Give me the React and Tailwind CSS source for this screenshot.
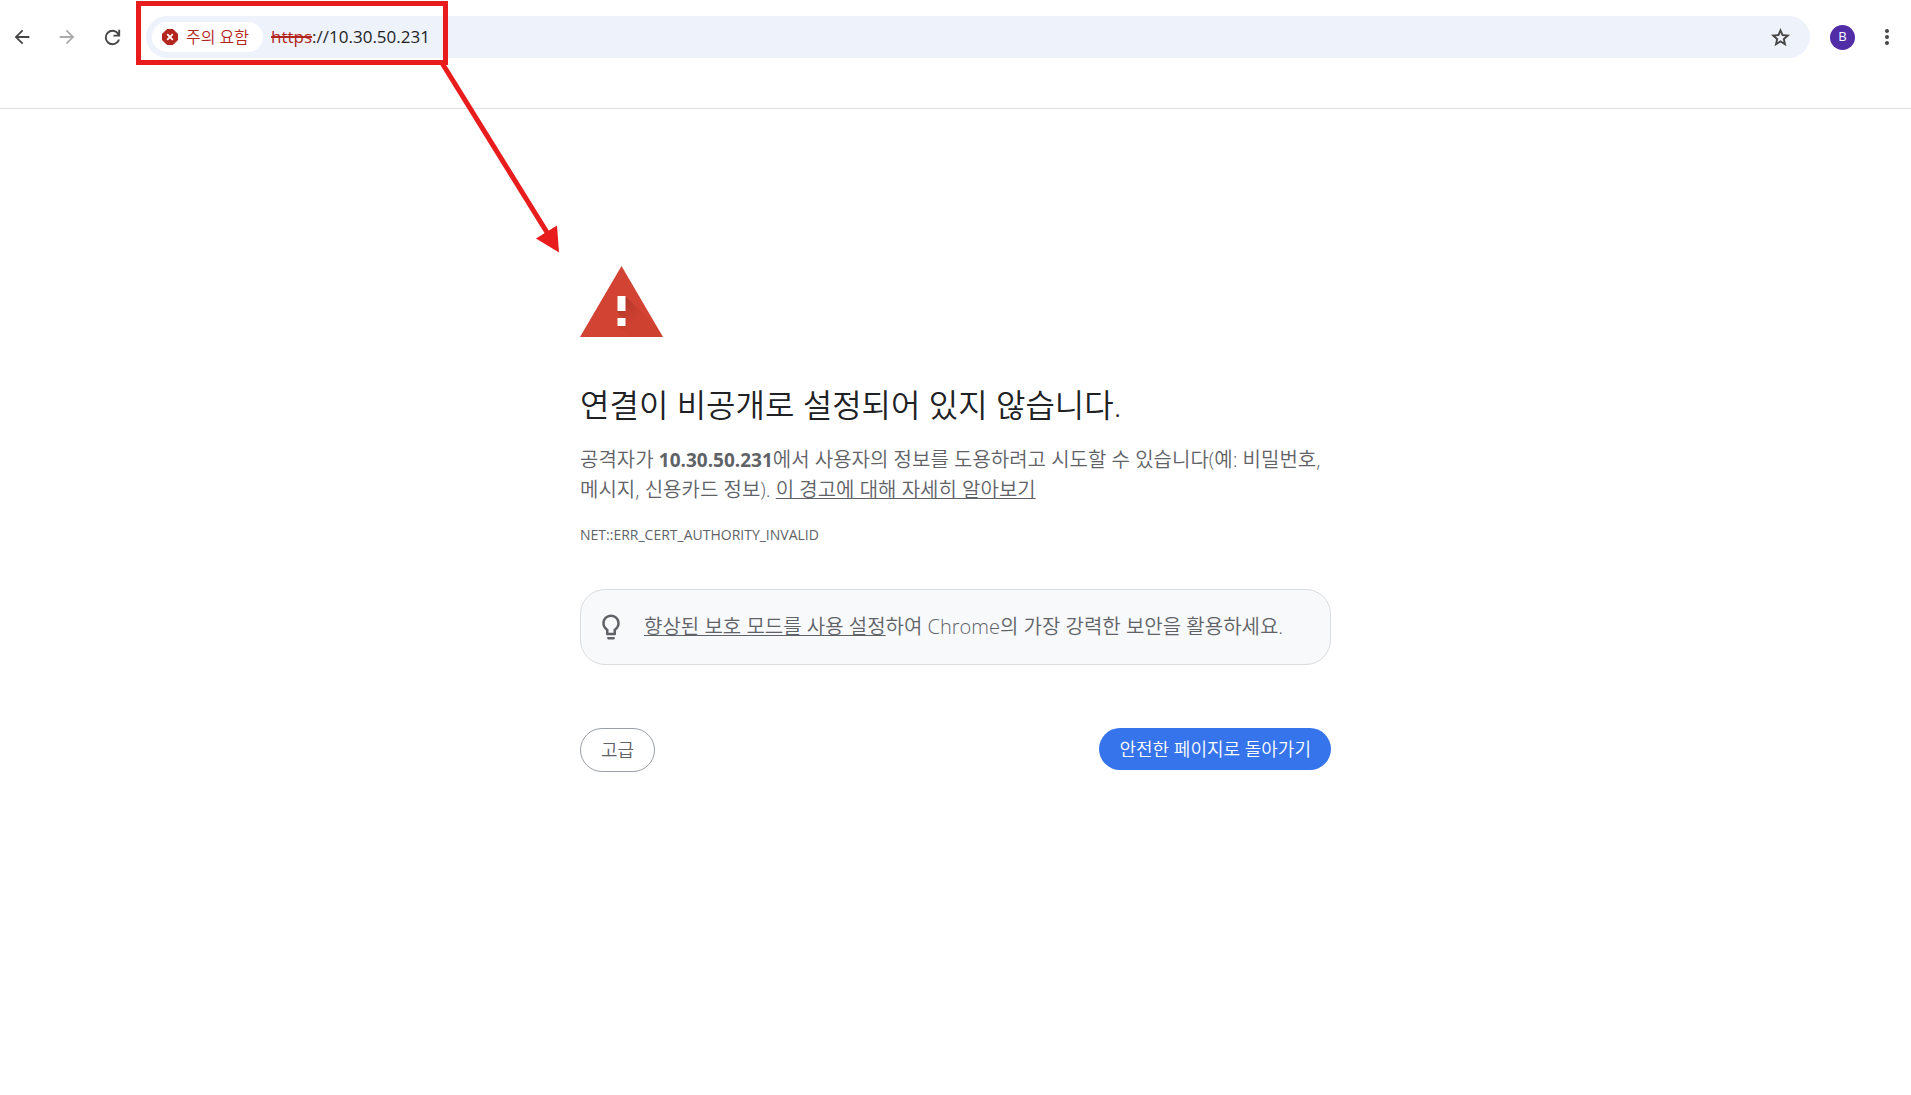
import { useState } from "react";

const FONT = "font-['Open_Sans','Noto_Sans_CJK_KR',sans-serif]";

function Icon({ size, path, className }) {
  return (
    <svg width={size} height={size} viewBox="0 0 24 24" fill="currentColor" className={className} aria-hidden="true">
      <path d={path} />
    </svg>
  );
}

const ICONS = {
  back: "M20 11H7.83l5.59-5.59L12 4l-8 8 8 8 1.41-1.41L7.83 13H20v-2z",
  forward: "M12 4l-1.41 1.41L16.17 11H4v2h12.17l-5.58 5.59L12 20l8-8z",
  reload: "M12 20q-3.35 0-5.675-2.325T4 12t2.325-5.675T12 4q1.725 0 3.3.712T18 6.75V4h2v7h-7V9h4.2q-.8-1.4-2.187-2.2T12 6Q9.5 6 7.75 7.75T6 12t1.75 4.25T12 18q1.925 0 3.475-1.1T17.65 14h2.1q-.7 2.65-2.85 4.325T12 20",
  star: "M22 9.24l-7.19-.62L12 2 9.19 8.63 2 9.24l5.46 4.73L5.82 21 12 17.27 18.18 21l-1.63-7.03L22 9.24zM12 14.9l-3.2 1.95.85-3.65-2.85-2.45 3.75-.33L12 7l1.45 3.42 3.75.33-2.85 2.45.85 3.65L12 14.9z",
  menu: "M12 8c1.1 0 2-.9 2-2s-.9-2-2-2-2 .9-2 2 .9 2 2 2zm0 2c-1.1 0-2 .9-2 2s.9 2 2 2 2-.9 2-2-.9-2-2-2zm0 6c-1.1 0-2 .9-2 2s.9 2 2 2 2-.9 2-2-.9-2-2-2z",
  bulb: "M9 20h6v1q0 1-1 1h-4q-1 0-1-1v-1zM12 2C8.14 2 5 5.14 5 9c0 2.38 1.19 4.47 3 5.74V17.5c0 .55.45 1 1 1h6c.55 0 1-.45 1-1v-2.76c1.81-1.27 3-3.36 3-5.74 0-3.86-3.14-7-7-7zm2.85 11.1l-.85.6V16.5h-4v-2.8l-.85-.6C7.8 12.16 7 10.63 7 9c0-2.76 2.24-5 5-5s5 2.24 5 5c0 1.63-.8 3.16-2.15 4.1z",
};

function NavButton({ label, path, size, disabled }) {
  return (
    <button
      type="button"
      aria-label={label}
      disabled={disabled}
      className="w-9 h-9 flex items-center justify-center rounded-full text-[#474747] disabled:text-[#ababab]"
    >
      <Icon size={size} path={path} />
    </button>
  );
}

function Toolbar() {
  return (
    <header className="h-[109px] border-b border-[#dfdfdf] pt-4 pl-1 pr-1.5">
      <div className="flex items-center h-[42px]">
        <nav className="flex gap-[9px] mr-4">
          <NavButton label="뒤로" path={ICONS.back} size={22} />
          <NavButton label="앞으로" path={ICONS.forward} size={22} disabled />
          <NavButton label="새로고침" path={ICONS.reload} size={23} />
        </nav>

        <div className="flex-1 h-full flex items-center rounded-full bg-[#edf2fb] pl-1.5 pr-[18px]">
          <button type="button" className="h-[30px] flex items-center rounded-full bg-white pl-2.5 pr-3.5 text-[16px] font-[350] text-[#b3261e]">
            <svg width="16" height="16" viewBox="0 0 16 16" className="mr-2" aria-hidden="true">
              <path d="M5 .5h6L15.5 5v6L11 15.5H5L.5 11V5z" fill="#b3261e" stroke="#b3261e" strokeLinejoin="round" />
              <path d="M5.2 5.2l5.6 5.6M10.8 5.2l-5.6 5.6" stroke="#fff" strokeWidth="1.8" />
            </svg>
            <span>주의 요함</span>
          </button>
          <p className="flex-1 ml-2 text-[17px] text-[#1f1f1f]">
            <span className="text-[#b3261e] line-through decoration-2">https</span>://10.30.50.231
          </p>
          <button type="button" aria-label="북마크" className="text-[#474747]">
            <Icon size={23} path={ICONS.star} />
          </button>
        </div>

        <button type="button" className="w-[25px] h-[25px] ml-5 mr-3.5 rounded-full bg-[#512da8] text-white text-[13px] flex items-center justify-center">
          B
        </button>
        <NavButton label="메뉴" path={ICONS.menu} size={24} />
      </div>
    </header>
  );
}

function WarningTriangle() {
  return (
    <svg width="83" height="71" viewBox="0 0 83 71" aria-hidden="true">
      <defs>
        <linearGradient id="shade" x1="37" y1="30" x2="62" y2="55" gradientUnits="userSpaceOnUse">
          <stop offset="0.2" stopColor="#a5352a" stopOpacity="0.8" />
          <stop offset="0.85" stopColor="#c53929" stopOpacity="0.3" />
        </linearGradient>
      </defs>
      <path d="M41.5 0L83 71H0z" fill="#d24333" />
      <path d="M45 30l31 30 7 11H49L37 60l8-4-8-11z" fill="url(#shade)" />
      <path d="M37.5 30h8v15h-8zM37.5 52h8v8h-8z" fill="#fff" />
    </svg>
  );
}

// red box round the address, with an arrow down to the warning
function Annotation() {
  return (
    <svg width="570" height="260" className="absolute top-0 left-0 pointer-events-none" aria-hidden="true">
      <rect x="138.5" y="3.5" width="307" height="59" fill="none" stroke="#e81c1c" strokeWidth="5" />
      <path d="M442 63L548 234" stroke="#e81c1c" strokeWidth="5" />
      <path d="M559 252.5L536 238.5L557 225.5z" fill="#e81c1c" />
    </svg>
  );
}

function App() {
  const [showDetails, setShowDetails] = useState(false);

  return (
    <div className={`relative min-h-screen bg-white ${FONT}`}>
      <Toolbar />
      <Annotation />

      <main className="max-w-[751px] mx-auto pt-[157px] text-[#5f6368]">
        <WarningTriangle />
        <h1 className="mt-12 text-[32px] leading-10 font-[350] text-[#202124]">연결이 비공개로 설정되어 있지 않습니다.</h1>
        <p className="mt-5 text-[20px] leading-[30px] font-[350]">
          공격자가 <strong className="text-[19px] font-bold">10.30.50.231</strong>에서 사용자의 정보를 도용하려고 시도할 수 있습니다(예: 비밀번호, 메시지, 신용카드 정보).{" "}
          <a href="#learn" className="underline decoration-1">이 경고에 대해 자세히 알아보기</a>
        </p>
        <p className="mt-[18px] text-[14px] leading-6">NET::ERR_CERT_AUTHORITY_INVALID</p>

        <div className="mt-[42px] h-[76px] flex items-center rounded-[25px] border border-[#dadce0] bg-[#f8f9fb] px-[15px]">
          <Icon size={30} path={ICONS.bulb} className="mr-[18px]" />
          <p className="text-[20px] leading-[30px] font-[350]">
            <a href="#enhanced" className="underline decoration-1">향상된 보호 모드를 사용 설정</a>하여 Chrome의 가장 강력한 보안을 활용하세요.
          </p>
        </div>

        <div className="mt-[63px] flex justify-between items-start">
          <button
            type="button"
            aria-expanded={showDetails}
            onClick={() => setShowDetails(!showDetails)}
            className="h-11 px-5 rounded-full border border-[#9aa0a6] text-[18px] font-[350]"
          >
            고급
          </button>
          <button type="button" className="h-[42px] px-5 rounded-full bg-[#3574ea] text-white text-[18px] font-[350]">
            안전한 페이지로 돌아가기
          </button>
        </div>
      </main>
    </div>
  );
}

export default App;
